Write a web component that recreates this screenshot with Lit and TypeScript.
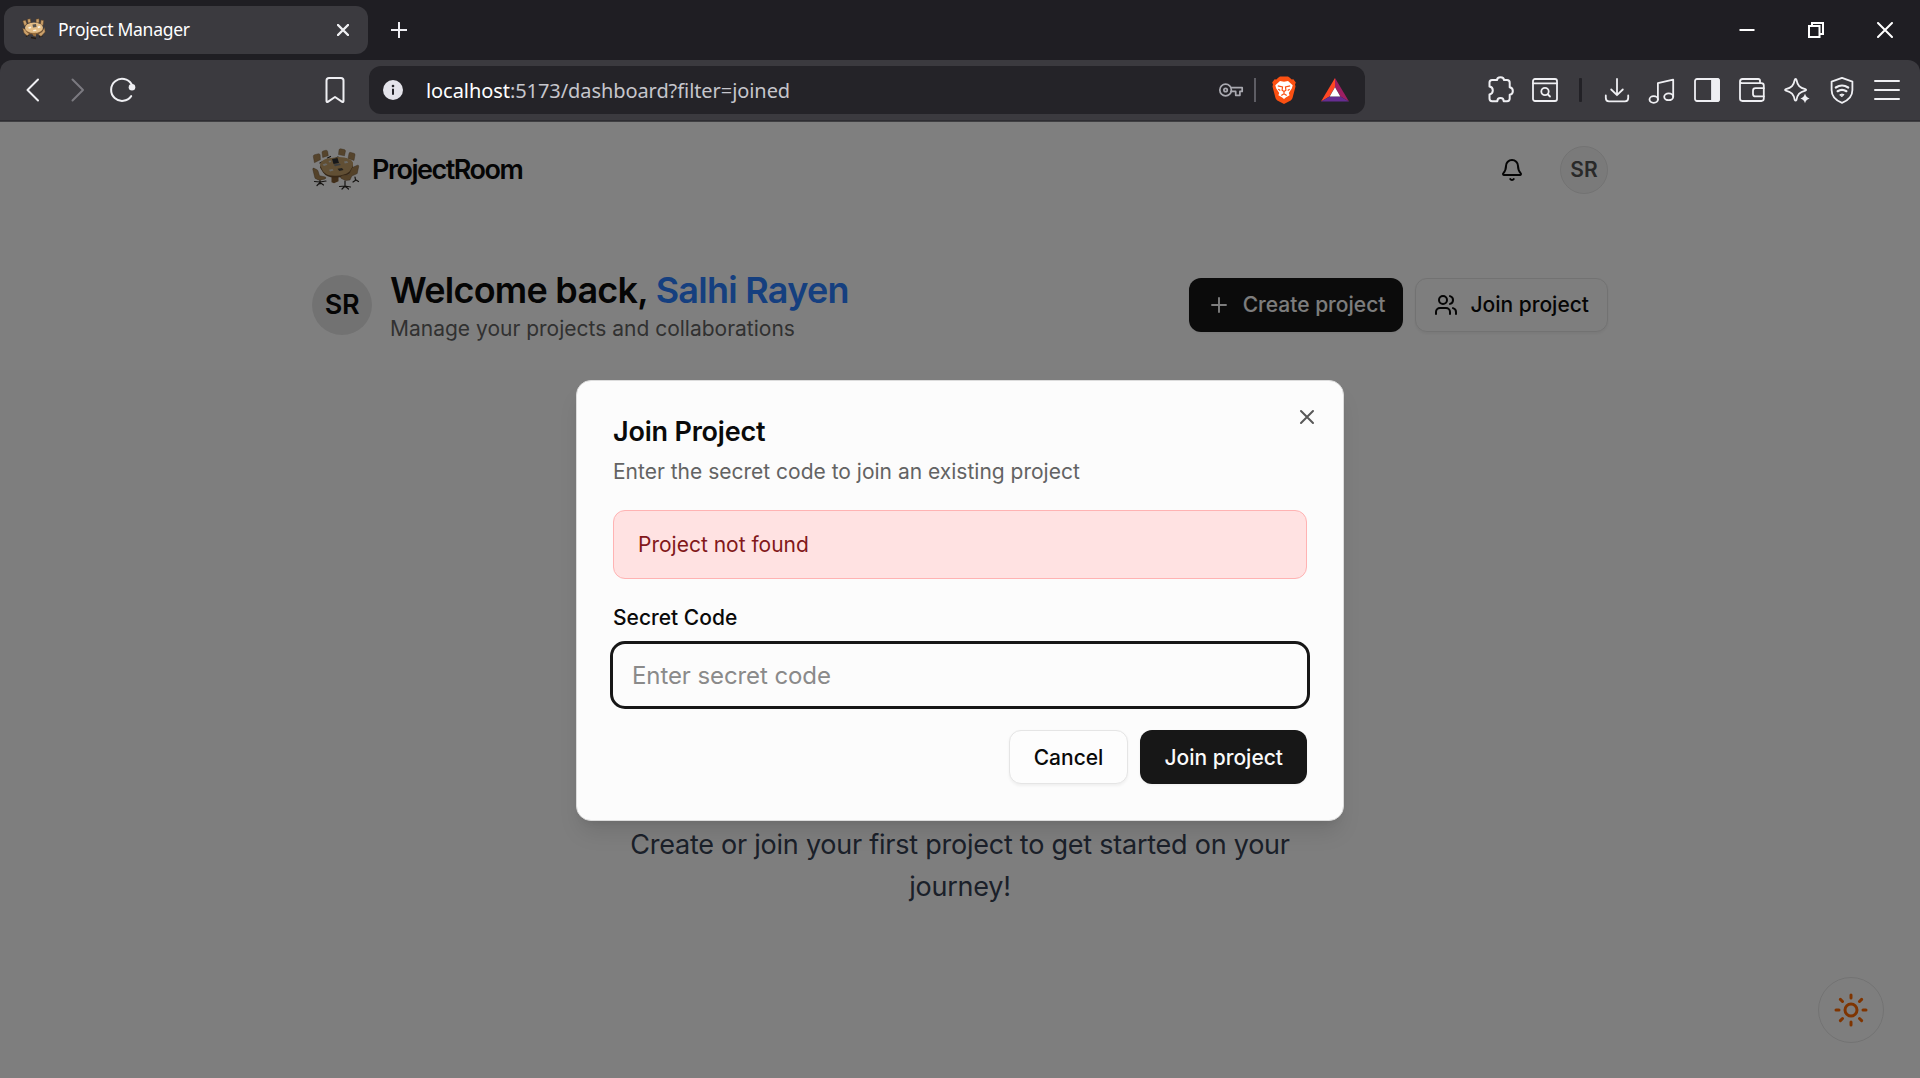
import { LitElement, html, css, svg } from "lit";
import { customElement } from "lit/decorators.js";

const table = html`<svg class="art" viewBox="0 0 48 44">
  <g stroke="#2b2723" stroke-width="1.200" fill="none" stroke-linecap="round">
    <path d="M8 31v5M2.500 33.500l5.500.5 6-1M5 37.500l3-3 3.500 2.500" />
    <path d="M33 33v6M27.500 38.500l5.500-.5 5.500 1M30 41l3-3 3.500 3M43 29l.5 3M41 34l3-2 2.500 1.500" />
    <path d="M8 15l3-1.500M15.500 10l3-1.500M26 9l-2 1M37 13l-3-2" />
  </g>
  <g fill="#ab8858" stroke="#6d5434" stroke-width=".4">
    <path d="M1.300 8.500q0-1.500 1.300-1.800l4-1q1.500 0 1.600 1.500l.2 4.500-6 3z" />
    <path d="M10 4.500q0-1.300 1.200-1.600l2.800-.7q1.500 0 1.700 1.500l.6 4-5.600 1.800z" />
    <path d="M27 2q.3-1.400 1.800-1.200l3.500.8q1.300.3 1.100 1.700l-.9 4.500-6-1.200z" />
    <path d="M37 5.500q.3-1.300 1.700-1.100l3.200.9q1.300.3 1.100 1.700l-1 5.500-6-2z" />
  </g>
  <path d="M19.500 28l7-.8v6l-4.500 2-2.500-1z" fill="#835d33" />
  <path d="M8 19.500q0-4 7-7L27 10.500q12 .5 14 6 .5 5-3.500 9-6 4.500-15 4-8 0-11.500-5z" fill="#6f5130" />
  <path d="M8 17q0-4 7-6.500L27 9q12 .5 14 5.500.5 5-3.500 9-6 4.800-15 4.300-8 0-11.500-4.500z" fill="#c29e68" />
  <g fill="#a98453" stroke="#5b4429" stroke-width=".4">
    <path d="M.8 21.500q-.2-1.800 1.200-1.300l3 1.500q1 .5 1.300 2l1.200 4 6 1.300q1 1.300-.5 2l-5 1.200q-1.500.2-5-2z" />
    <path d="M28.500 29q.3-1.500 2-1.800l6.500-.7 2.500-6q.4-1 1.500-1.300l4.500-2q1.300-.2 1.200 1.200l-1.500 7.200-5.400 2.400-1.800 4-4.500.6-4.500-2.300z" />
  </g>
  <path d="M20 11l5.500-1 1.500 5-5.500 1z" fill="#2f3134" />
  <path d="M21.500 16.500l6-1 1.500 1.500-6 1.200z" fill="#767a7e" />
  <path d="M10.500 16.500l3.500-1.300 1.500 1.500-3.500 1.300zM17 21.800l3.500-.8 1 1.600-3.500.9zM32 13.500l3-.5 1.300 1.800-3.500.8zM16.500 13l2-.5.8 1.500-2 .5z" fill="#d4d3cd" />
  <path d="M25.500 20.700l4.500-.8 1.500 2-4.200 1z" fill="#45423d" />
</svg>`;

const favicon = html`<svg class="fav" viewBox="0 0 24 22">
  <g stroke="#241b14" stroke-width="1.300" fill="none"><path d="M4 18.500l3-2M17 19l3.500-1M3 13l-2-1.500M21 13l2-1M9 19.500l5 1" /></g>
  <g fill="#cba06a" stroke="#5d4327" stroke-width=".5">
    <path d="M.8 3l2.700-1 1.500 4-2.500 2zM5.500 1.200l2.800-.4.5 3.700-2.800.5zM14 1.200l3-.5.2 4-3 .3zM19 2l2.700.5L21 7.500l-2.500-1zM.6 10l3 1.500 4 4.500-2.500 1.800L2 15zM16 16l4-2.300 2.500-4.200.7 4.500-4.200 4.500z" />
  </g>
  <ellipse cx="12" cy="11.300" rx="8.800" ry="5.300" fill="#7f5a33" />
  <ellipse cx="12" cy="9.800" rx="9" ry="5.300" fill="#e4bd86" />
  <path d="M10 15l4-.2v3.700l-2.500-.5z" fill="#9a6f3d" />
  <path d="M10.500 6.500l3.500-.5.5 3-3.500.5z" fill="#5a5651" />
  <path d="M6 9.500l2.500-1 1 1.500-2.500.8zM15.500 8.500l2.500-.5.6 1.500-2.500.7zM11 12l3-.5.5 1.300-3 .5z" fill="#faf3e4" />
</svg>`;

const ic = (body: unknown, size = 28, sw = 1.8) => html`<svg
  class="ic"
  width=${size}
  height=${size}
  viewBox="0 0 ${size} ${size}"
  stroke-width=${sw}
>${body}</svg>`;

const lucide = (body: unknown, size = 24, sw = 2) => html`<svg
  class="ic"
  width=${size}
  height=${size}
  viewBox="0 0 24 24"
  stroke-width=${sw}
>${body}</svg>`;

const back = ic(svg`<path d="M20 3.500L9.500 14 20 24.500" stroke-width="2" />`);
const forward = ic(svg`<path d="M9.500 3.500L20 14 9.500 24.500" stroke-width="2" />`);
const reload = ic(svg`<path d="M23.200 20.100A11 11 0 1 1 23.600 8.300" stroke-width="2" /><circle cx="24" cy="11.300" r="3.300" fill="currentColor" stroke="none" />`);
const bookmark = ic(svg`<path d="M5.500 4.500Q5.500 2 8 2h12q2.500 0 2.500 2.500V25q0 1.500-1.300.8L14 21l-7.200 4.800Q5.500 26.500 5.500 25z" stroke-width="2" />`);
const puzzle = ic(svg`<path d="M3.500 8.500V6.500Q3.500 4 6 4H11.100C11.100 .4 17.900 .4 17.900 4H21Q23.700 4 23.700 6.700V11.200C27.900 12 27.900 18 23.700 18.800V22.600Q23.700 25.200 21.100 25.200H17.700C17.700 20.900 11.300 20.900 11.300 25.200H6.100Q3.500 25.200 3.500 22.600V18.400C7.900 17.600 7.900 11.400 3.500 10.600z" stroke-width="2" />`);
const findPage = ic(svg`<rect x="2" y="3" width="24" height="22" rx="2" /><path d="M2 7.300h24" /><circle cx="14" cy="15.500" r="3.700" /><path d="M17 18.500l2 2" />`);
const download = ic(svg`<path d="M14 3v16M8.200 13.500L14 19.200l5.800-5.700M2.800 19.500v2.500Q2.800 25.300 6 25.300h16q3.200 0 3.200-3.300v-2.500" />`);
const music = ic(svg`<ellipse cx="5.700" cy="23.500" rx="4.200" ry="3.300" /><ellipse cx="20.700" cy="20.800" rx="4.500" ry="3.400" /><path d="M9.900 23.500V7.200L25.200 3.700v17" />`);
const panel = ic(svg`<rect x="2" y="3" width="24" height="22" rx="2" /><path d="M19 3h5q2 0 2 2v18q0 2-2 2h-5z" fill="currentColor" />`);
const wallet = ic(svg`<path d="M22 7V4.700Q22 3 20.300 3H4.500Q2 3 2 5.500V22.600Q2 25 4.400 25H23.300Q25.800 25 25.800 22.600V9.600Q25.800 7.200 23.300 7.200H4Q2 7 2 5" /><path d="M25.800 12.200h-8.300q-2.500 0-2.500 2.500v3.200q0 2.500 2.500 2.500h8.300" />`);
const sparkle = ic(svg`<path d="M12.600 3Q13.300 3 13.500 4C14.600 9.500 16.600 11.800 22.300 13.200Q24 13.900 22.300 14.600C16.600 16 14.600 18.200 13.500 23.800Q12.600 25.600 11.700 23.800C10.600 18.200 8.600 16 2.900 14.600Q1.200 13.900 2.900 13.200C8.600 11.800 10.600 9.500 11.700 4Q11.900 3 12.600 3z" /><path d="M22 17.500q.9 4 4.600 4.900-3.700.9-4.600 4.900-.9-4-4.600-4.900 3.700-.9 4.600-4.900z" fill="currentColor" stroke="none" />`);
const vpn = ic(svg`<path d="M14 1.800l10.400 3.800v8.500c0 6-4.300 10.500-10.400 12.800C7.900 24.600 3.600 20.100 3.600 14.100V5.600z" /><path d="M7.800 11.500q6.200-4 12.400 0M9.600 15.200q4.400-2.800 8.800 0" stroke-width="2.200" /><path d="M12 18.600q2-1.200 4 0l-2 2z" fill="currentColor" stroke-width="1" />`);
const menu = ic(svg`<path d="M2 5h24M2 14h24M2 23h24" stroke-width="2" />`);
const keyIcon = ic(svg`<circle cx="8.600" cy="14" r="5.800" /><circle cx="8.600" cy="14" r="1.700" /><path d="M14 11.700h11.200v3.700h-2.300v3.900h-4.200v-3.900h-4.800" />`, 28, 1.7);

const brave = html`<svg width="24" height="28" viewBox="0 0 24 28">
  <path d="M6.500 1.500L8 .5h8l1.500 1 2.200 2 1.700-.3L23.800 6.500l-.8 2 .5 2-3 11.500q-.4 1.500-1.800 2.400L12 28l-6.700-3.600q-1.400-.9-1.800-2.400L.5 10.500 1 8.500l-.8-2 2.400-3.300 1.700.3z" fill="#fb5012" />
  <path d="M8 5l4 .8 4-.8 4.700 4.300-.8 3-3.100 4.700.8 2.200-3.800 2.200-1.800 1.700-1.800-1.700-3.800-2.200.8-2.200-3.100-4.700-.8-3z" fill="#fff" />
  <path d="M5.800 9.800l4.700 1.200-.4 3.200 1.900 1.300 1.900-1.300-.4-3.200 4.700-1.200M12 15.300v2.500M9.300 19.500l2.700-1.700 2.700 1.700M6.300 13.300l2 1.200M17.700 13.300l-2 1.200" fill="none" stroke="#fb5012" stroke-width="1.200" />
</svg>`;
const bat = html`<svg width="28" height="24" viewBox="0 0 28 24">
  <path d="M14 0L0 23.500l8.500-5L14 9z" fill="#ff4724" />
  <path d="M14 0l14 23.500-8.500-5L14 9z" fill="#9e1f63" />
  <path d="M0 23.500h28l-8.500-5h-11z" fill="#662d91" />
  <path d="M14 9.300l5.300 9.200H8.700z" fill="#fff" />
</svg>`;

const plus = lucide(svg`<path d="M5 12h14M12 5v14" />`, 24, 1.9);
const users = lucide(svg`<path d="M16 21v-2a4 4 0 0 0-4-4H6a4 4 0 0 0-4 4v2" /><circle cx="9" cy="7" r="4" /><path d="M22 21v-2a4 4 0 0 0-3-3.870M16 3.130a4 4 0 0 1 0 7.750" />`);
const bell = lucide(svg`<path d="M10.268 21a2 2 0 0 0 3.464 0M3.262 15.326A1 1 0 0 0 4 17h16a1 1 0 0 0 .74-1.673C19.410 13.956 18 12.499 18 8A6 6 0 0 0 6 8c0 4.499-1.411 5.956-2.738 7.326" />`);
const close = lucide(svg`<path d="M18 6 6 18M6 6l12 12" />`);
const sun = lucide(svg`<circle cx="12" cy="12" r="4" /><path d="M12 2v2M12 20v2M4.930 4.930l1.410 1.410M17.660 17.660l1.410 1.410M2 12h2M20 12h2M6.340 17.660l-1.410 1.410M19.070 4.930l-1.410 1.410" />`, 36);

@customElement("browser-chrome")
class BrowserChrome extends LitElement {
  static styles = css`
    :host { display: block; background: #1f1e23; color: #efeff3; font-family: "Noto Sans", sans-serif; }
    .ic { fill: none; stroke: currentColor; stroke-linecap: round; stroke-linejoin: round; display: block; }
    .fav { width: 24px; height: 22px; display: block; margin-top: -2px; }
    .strip { display: flex; height: 60px; box-sizing: border-box; padding: 6px 1px 6px 4px; align-items: center; }
    .tab { width: 364px; height: 48px; box-sizing: border-box; border-radius: 12px; background: #3b3a3f; display: flex; align-items: center; padding: 0 19px 0 18px; }
    .tabname { flex: 1; margin-left: 12px; font-size: 17.500px; letter-spacing: -0.28px; color: #fff; white-space: nowrap; line-height: 24px; margin-top: -3px; }
    .add { margin-left: 23px; }
    .win { margin-left: auto; display: flex; color: #fff; }
    .win span { width: 69px; display: flex; justify-content: center; margin-top: -1px; }
    .bar { height: 60px; border-radius: 12px 12px 0 0; background: #3b3a3f; display: flex; align-items: center; padding-left: 9px; box-sizing: border-box; }
    .edge { height: 2px; background: linear-gradient(#2e2d32 50%, #3f3f42 50%); }
    .btn { width: 45px; display: flex; justify-content: center; flex: none; }
    .dim { color: #7b7a80; }
    .mark { margin-left: 168px; }
    .url { width: 996px; height: 48px; border-radius: 12px; background: #242328; margin-left: 12px; display: flex; align-items: center; flex: none; }
    .info { width: 20px; height: 20px; margin-left: 14px; display: block; }
    .addr { margin-left: 23px; font-size: 20px; letter-spacing: -0.07px; color: #c6c6cc; white-space: nowrap; flex: 1; line-height: 28px; margin-top: 1px; }
    .addr b { color: #fff; font-weight: 400; }
    .key { color: #a9a9b0; }
    .vr { width: 2px; height: 24px; background: #5e5d64; margin: 0 16px 0 9px; }
    .bat { margin: 0 16px 0 25px; display: flex; }
    .brave { display: flex; }
    .tools { margin-left: 112px; display: flex; align-items: center; }
    .sep { width: 3px; height: 24px; margin: 0 12px; background: #222126; border-radius: 1px; }
  `;
  render() {
    return html`
      <div class="strip">
        <div class="tab">
          ${favicon}<span class="tabname">Project Manager</span>
          <svg class="ic" width="12" height="12" viewBox="0 0 12 12" stroke-width="2.400"><path d="M1 1l10 10M11 1L1 11" /></svg>
        </div>
        <svg class="ic add" width="16" height="16" viewBox="0 0 16 16" stroke-width="2"><path d="M8 .5v15M.5 8h15" /></svg>
        <div class="win">
          <span><svg class="ic" width="16" height="16" viewBox="0 0 16 16"><path d="M.5 8h15" stroke-width="2" stroke-linecap="butt" /></svg></span>
          <span><svg class="ic" width="16" height="16" viewBox="0 0 16 16" stroke-width="2"><path d="M1 4h10.500v11H1zM4 4V1h11v11h-3" stroke-linejoin="miter" /></svg></span>
          <span><svg class="ic" width="16" height="16" viewBox="0 0 16 16" stroke-width="2"><path d="M1 1l14 14M15 1L1 15" /></svg></span>
        </div>
      </div>
      <div class="bar">
        <span class="btn">${back}</span><span class="btn dim">${forward}</span><span class="btn">${reload}</span>
        <span class="btn mark">${bookmark}</span>
        <div class="url">
          <svg class="info" viewBox="0 0 20 20"><circle cx="10" cy="10" r="10" fill="#e4e3ea" /><circle cx="10" cy="6" r="1.300" fill="#242328" /><path d="M10 8.800v6" stroke="#242328" stroke-width="2" /></svg>
          <span class="addr"><b>localhost</b>:5173/dashboard?filter=joined</span>
          <span class="key">${keyIcon}</span><span class="vr"></span>
          <span class="brave">${brave}</span><span class="bat">${bat}</span>
        </div>
        <div class="tools">
          <span class="btn">${puzzle}</span><span class="btn">${findPage}</span><span class="sep"></span>
          ${[download, music, panel, wallet, sparkle, vpn, menu].map((i) => html`<span class="btn">${i}</span>`)}
        </div>
      </div>
      <div class="edge"></div>
    `;
  }
}

const button = css`
  .ic { fill: none; stroke: currentColor; stroke-linecap: round; stroke-linejoin: round; display: block; flex: none; }
  .button { height: 54px; box-sizing: border-box; border-radius: 12px; display: flex; align-items: center; gap: 12px; font-size: 21px; font-weight: 500; line-height: 30px; white-space: nowrap; }
  .solid { background: #171717; color: #fafafa; box-shadow: 0 1px 3px rgba(0, 0, 0, 0.05); }
  .outline { background: #fdfdfd; color: #0a0a0a; border: 1px solid #e5e5e5; box-shadow: 0 1.500px 3px rgba(0, 0, 0, 0.05); }
`;

@customElement("join-dialog")
class JoinDialog extends LitElement {
  static styles = [
    button,
    css`
      :host { display: block; position: relative; width: 768px; height: 441px; margin-top: 1px; box-sizing: border-box; padding: 36px; border: 1px solid #dcdcdc; border-radius: 15px; background: #fcfcfc; color: #0a0a0a; box-shadow: 0 15px 22px -4px rgba(0, 0, 0, 0.1), 0 6px 9px -6px rgba(0, 0, 0, 0.1); }
      .x { position: absolute; right: 24px; top: 24px; color: #585858; }
      .title { font-size: 27px; line-height: 27px; font-weight: 600; letter-spacing: -0.2px; margin-top: 1px; }
      .desc { font-size: 21px; line-height: 30px; color: #636363; margin-top: 12px; }
      .alert { height: 69px; box-sizing: border-box; border: 1px solid #ffb3b3; border-radius: 12px; background: #ffe2e2; color: #82181a; font-size: 21px; line-height: 30px; padding: 19px 24px 0; margin-top: 23px; }
      .label { font-size: 21px; line-height: 21px; font-weight: 500; margin-top: 28px; }
      .input { height: 68px; box-sizing: border-box; margin: 13px -3px 0; border: 3px solid #171717; border-radius: 15px; font-size: 24px; line-height: 36px; letter-spacing: -0.09px; color: #8a8a8a; padding: 14px 19px 0; }
      .foot { display: flex; justify-content: flex-end; gap: 12px; margin-top: 21px; }
      .foot .button { padding: 2px 24px 0; }
    `,
  ];
  render() {
    return html`
      <div class="x">${close}</div>
      <div class="title">Join Project</div>
      <div class="desc">Enter the secret code to join an existing project</div>
      <div class="alert">Project not found</div>
      <div class="label">Secret Code</div>
      <div class="input">Enter secret code</div>
      <div class="foot">
        <div class="button outline">Cancel</div>
        <div class="button solid">Join project</div>
      </div>
    `;
  }
}

@customElement("app-root")
class AppRoot extends LitElement {
  static styles = [
    button,
    css`
      :host { display: flex; flex-direction: column; height: 1078px; overflow: hidden; font-family: Inter, sans-serif; }
      .view { position: relative; flex: 1; background: #fdfdfd; color: #0a0a0a; }
      .hero { background: #fff; height: 248px; }
      .wrap { width: 1296px; margin: 0 auto; display: flex; align-items: center; }
      .nav { height: 96px; }
      .art { width: 48px; height: 44px; display: block; }
      .brand { margin-left: 12px; margin-top: -2px; font-size: 27px; font-weight: 600; letter-spacing: -1.500px; flex: 1; }
      .avatar { border-radius: 50%; display: flex; align-items: center; justify-content: center; box-sizing: border-box; background: #e5e5e5; font-weight: 600; }
      .small { width: 48px; height: 48px; margin-left: 36px; font-size: 21px; line-height: 30px; padding-bottom: 1px; background: #f5f5f5; border: 1px solid #e5e5e5; color: #525252; }
      .big { width: 60px; height: 60px; font-size: 27px; letter-spacing: -0.3px; padding-bottom: 1px; }
      .welcome { padding-top: 48px; }
      .hi { margin-left: 18px; flex: 1; }
      .h1 { font-size: 36px; line-height: 48px; font-weight: 600; letter-spacing: -0.740px; }
      .name { color: #2b7fff; }
      .sub { font-size: 21px; line-height: 30px; color: #636363; }
      .acts { display: flex; gap: 12px; }
      .acts .button { padding: 0 18px; }
      .empty { width: 672px; margin: 454px auto 0; font-size: 27px; line-height: 42px; letter-spacing: -0.240px; text-align: center; color: #364153; }
      .fab { position: absolute; right: 36px; bottom: 35px; width: 66px; height: 66px; border-radius: 50%; border: 1px solid #e5e5e5; box-sizing: border-box; display: flex; align-items: center; justify-content: center; color: #ff6900; }
      .overlay { position: absolute; inset: 0; background: rgba(0, 0, 0, 0.5); display: flex; align-items: center; justify-content: center; }
    `,
  ];
  render() {
    return html`
      <browser-chrome></browser-chrome>
      <div class="view">
        <div class="hero">
          <div class="wrap nav">
            ${table}<span class="brand">ProjectRoom</span>${bell}
            <span class="avatar small">SR</span>
          </div>
          <div class="wrap welcome">
            <span class="avatar big">SR</span>
            <div class="hi">
              <div class="h1">Welcome back, <span class="name">Salhi Rayen</span></div>
              <div class="sub">Manage your projects and collaborations</div>
            </div>
            <div class="acts">
              <div class="button solid">${plus}<span>Create project</span></div>
              <div class="button outline">${users}<span>Join project</span></div>
            </div>
          </div>
        </div>
        <div class="empty">Create or join your first project to get started on your journey!</div>
        <div class="fab">${sun}</div>
        <div class="overlay"><join-dialog></join-dialog></div>
      </div>
    `;
  }
}
